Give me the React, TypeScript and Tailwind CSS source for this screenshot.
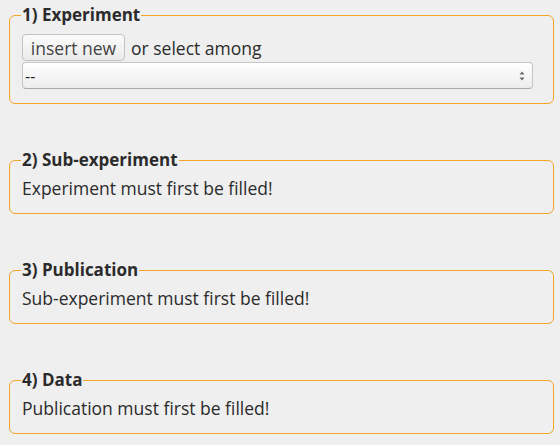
import React from "react";

const font = { fontFamily: '"Open Sans", "Noto Sans", sans-serif' };

function Box({ title, children, className }: { title: string; children: React.ReactNode; className?: string }) {
  return (
    <fieldset
      className={`ml-[9px] w-[545px] border border-[#f5a42a] rounded-[6px] pl-[12px] pr-[20px] ${className ?? ""}`}
    >
      <legend className="ml-[-1px] px-[1px] text-[17px] leading-[22px] font-bold text-[#2b2b2b]">{title}</legend>
      {children}
    </fieldset>
  );
}

export default function App() {
  return (
    <div className="w-[560px] h-[445px] bg-[#efefef] text-[#2b2b2b] pt-[4px]" style={font}>
      <Box title="1) Experiment" className="pt-[8px] pb-[14px]">
        <div className="flex items-center gap-[6px] text-[17.5px] leading-[22px]">
          <button className="h-[27px] w-[103px] rounded-[4px] border border-[#c3c3c3] bg-gradient-to-b from-[#fbfbfb] to-[#ebebeb] text-[#444] text-[17.5px] leading-[22px]">
            insert new
          </button>
          <span>or select among</span>
        </div>
        <div className="mt-[1px] h-[27px] w-[511px] rounded-[4px] border border-[#c6c6c6] border-b-[#a9a9a9] bg-gradient-to-b from-[#ffffff] to-[#ececec] flex items-center justify-between pl-[2px] pr-[6px] text-[16px] leading-[20px]">
          <span className="text-[#222]">--</span>
          <svg width="8" height="14" viewBox="0 0 8 14">
            <path d="M4 2.5 L6.5 5.5 L1.5 5.5 Z" fill="#666" />
            <path d="M4 11.5 L6.5 8.5 L1.5 8.5 Z" fill="#666" />
          </svg>
        </div>
      </Box>
      <Box title="2) Sub-experiment" className="mt-[45px] pt-[6px] pb-[14px]">
        <div className="text-[17.5px] leading-[22px]">Experiment must first be filled!</div>
      </Box>
      <Box title="3) Publication" className="mt-[45px] pt-[6px] pb-[14px]">
        <div className="text-[17.5px] leading-[22px]">Sub-experiment must first be filled!</div>
      </Box>
      <Box title="4) Data" className="mt-[45px] pt-[6px] pb-[14px]">
        <div className="text-[17.5px] leading-[22px]">Publication must first be filled!</div>
      </Box>
    </div>
  );
}
